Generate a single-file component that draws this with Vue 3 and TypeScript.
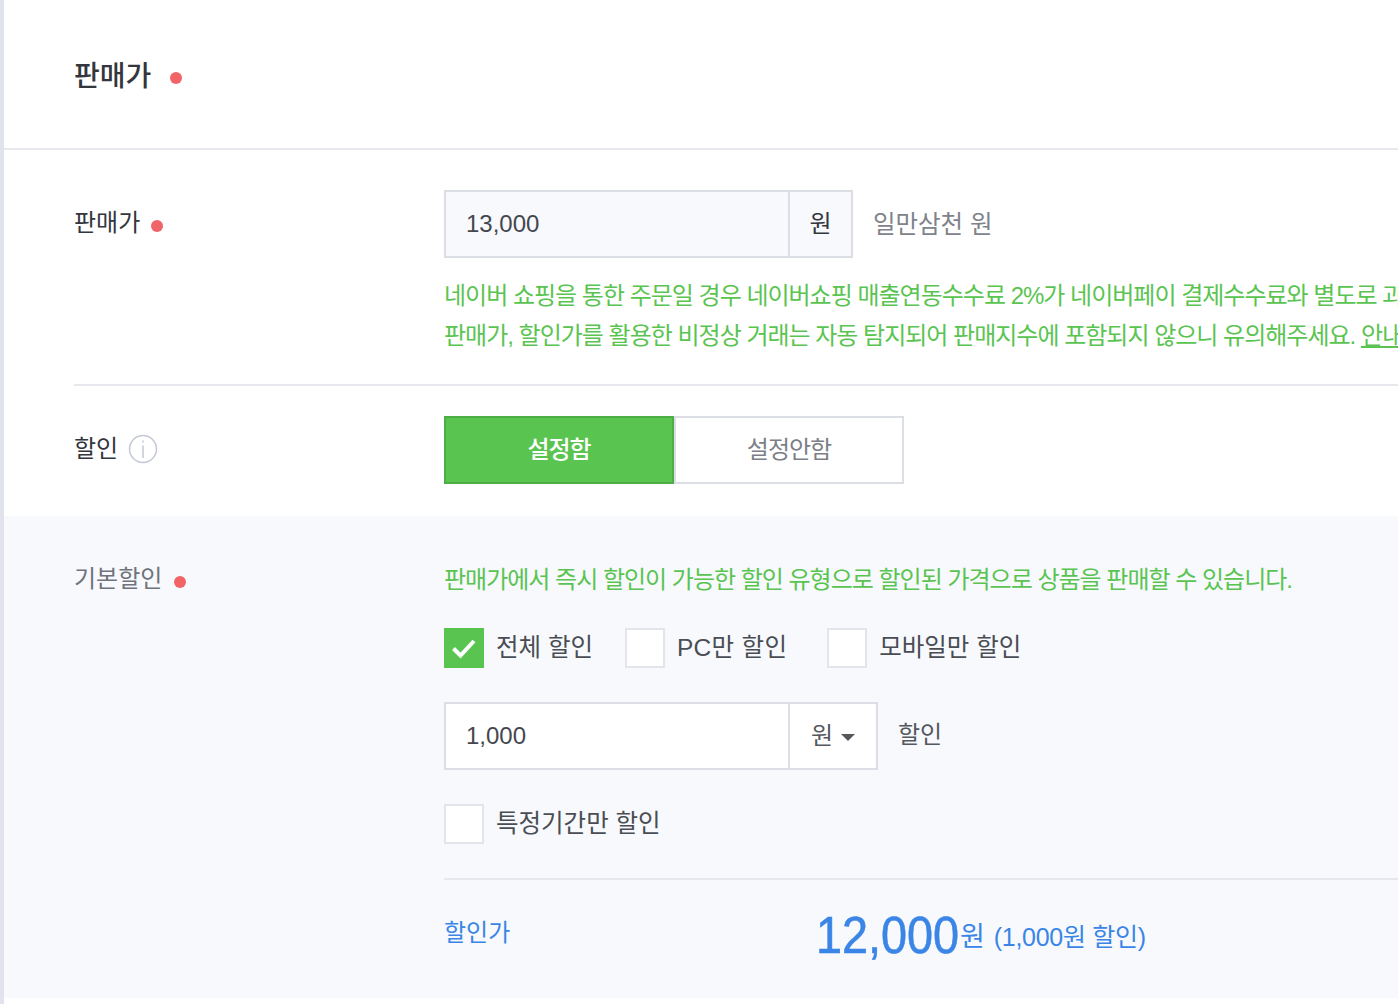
<script setup lang="ts">
const options = [
  { label: '전체 할인', checked: true },
  { label: 'PC만 할인', checked: false },
  { label: '모바일만 할인', checked: false },
]
</script>

<template>
  <div class="page">
    <header class="head">
      <h2 class="title">판매가</h2>
      <i class="dot big"></i>
    </header>

    <section class="row price-row">
      <div class="label">판매가<i class="dot"></i></div>
      <div class="body">
        <div class="field-line">
          <div class="combo tinted">
            <span class="value">13,000</span>
            <span class="unit">원</span>
          </div>
          <span class="hangul">일만삼천 원</span>
        </div>
        <p class="note first">네이버 쇼핑을 통한 주문일 경우 네이버쇼핑 매출연동수수료 2%가 네이버페이 결제수수료와 별도로 과금됩니다.</p>
        <p class="note">판매가, 할인가를 활용한 비정상 거래는 자동 탐지되어 판매지수에 포함되지 않으니 유의해주세요. <u>안내</u></p>
      </div>
    </section>

    <section class="row toggle-row">
      <div class="label">할인
        <svg class="info" width="30" height="30" viewBox="0 0 30 30" fill="none">
          <circle cx="15" cy="15" r="13.5" stroke="#c3c8d4" stroke-width="1.5" />
          <path d="M15 11.5V24M15 6.5v2" stroke="#c3c8d4" stroke-width="1.5" />
        </svg>
      </div>
      <div class="body">
        <div class="toggle">
          <button class="btn on"><span>설정함</span></button>
          <button class="btn off"><span>설정안함</span></button>
        </div>
      </div>
    </section>

    <section class="panel">
      <div class="label muted">기본할인<i class="dot"></i></div>
      <div class="body">
        <p class="note single">판매가에서 즉시 할인이 가능한 할인 유형으로 할인된 가격으로 상품을 판매할 수 있습니다.</p>
        <div class="checks">
          <label v-for="o in options" :key="o.label" class="check">
            <span class="box" :class="{ checked: o.checked }">
              <svg v-if="o.checked" width="26" height="22" viewBox="0 0 26 22" fill="none">
                <path d="M2.5 11.5 9.5 18.5 23 4" stroke="#fff" stroke-width="4" />
              </svg>
            </span>
            <span class="check-text">{{ o.label }}</span>
          </label>
        </div>
        <div class="field-line discount">
          <div class="combo">
            <span class="value">1,000</span>
            <span class="unit select">원<i class="caret"></i></span>
          </div>
          <span class="suffix">할인</span>
        </div>
        <label class="check period">
          <span class="box"></span>
          <span class="check-text">특정기간만 할인</span>
        </label>
        <div class="result">
          <span class="result-label">할인가</span>
          <div class="amount">
            <strong>12,000</strong><span class="won">원</span><span class="detail">(1,000원 할인)</span>
          </div>
        </div>
      </div>
    </section>
  </div>
</template>

<style>
html, body { margin: 0; background: #fff; }
</style>

<style scoped>
.page {
  width: 1398px;
  height: 1004px;
  box-sizing: border-box;
  overflow: hidden;
  border-left: 4px solid #e0e3ec;
  background: #fff;
  color: #33363c;
  font-family: "Liberation Sans", "Noto Sans CJK KR", sans-serif;
  font-size: 24px;
}
.head {
  height: 148px;
  box-sizing: content-box;
  border-bottom: 2px solid #e6e8ed;
  padding-left: 70px;
  display: flex;
  align-items: center;
  gap: 19px;
}
.title { margin: 6px 0 0; font-size: 28px; font-weight: 500; line-height: 40px; }
.dot {
  display: inline-block;
  width: 12px;
  height: 12px;
  border-radius: 50%;
  background: #f06366;
  margin: 6px 0 0 11px;
}
.dot.big { margin: 8px 0 0; }
.row { margin-left: 70px; display: flex; }
.price-row { padding-top: 40px; height: 194px; box-sizing: content-box; border-bottom: 2px solid #e6e8ed; }
.toggle-row { padding-top: 30px; height: 100px; }
.label { width: 370px; flex: none; line-height: 66px; height: 66px; white-space: nowrap; display: flex; align-items: center; }
.label.muted { color: #6f737b; line-height: 40px; height: 40px; }
.label.muted .dot { margin-left: 12px; }
.info { margin-left: 10px; }
.body { flex: 1; min-width: 0; }
.field-line { display: flex; align-items: center; }
.combo {
  display: flex;
  height: 68px;
  box-sizing: border-box;
  border: 2px solid #dcdee5;
  background: #fff;
}
.combo.tinted { background: #f7f9fd; }
.value { width: 342px; box-sizing: border-box; padding-left: 20px; line-height: 64px; font-size: 24px; color: #44474e; }
.unit { border-left: 2px solid #dcdee5; width: 63px; box-sizing: border-box; text-align: center; line-height: 64px; font-size: 24px; }
.unit.select { width: 88px; color: #55585f; display: flex; align-items: center; justify-content: center; gap: 8px; }
.caret { width: 0; height: 0; border: 7.5px solid transparent; border-top: 7.5px solid #55585f; border-bottom: 0; margin-top: 3px; }
.hangul { margin: 0 0 4px 20px; color: #80838a; font-size: 24.5px; }
.suffix { margin: 0 0 8px 20px; color: #55585f; }
.note {
  margin: 0;
  color: #5ac451;
  font-size: 24px;
  line-height: 40px;
  letter-spacing: -1px;
  white-space: nowrap;
}
.note.first { margin-top: 18px; }
.note u { text-decoration: underline; }
.toggle { display: flex; height: 68px; }
.btn {
  font: inherit;
  letter-spacing: -1px;
  box-sizing: border-box;
  height: 68px;
  padding: 0 0 6px;
  cursor: pointer;
}
.btn.on { width: 230px; background: #5ac451; border: 2px solid #4cae44; color: #fff; font-weight: 500; }
.btn.off { width: 230px; background: #fff; border: 2px solid #dcdee5; color: #7c7f87; }
.panel {
  height: 482px;
  background: #f7f9fd;
  box-sizing: border-box;
  padding: 44px 0 0 70px;
  display: flex;
}
.panel .label { margin-top: -1px; }
.checks { display: flex; gap: 32px; margin-top: 28px; }
.check { display: flex; align-items: center; gap: 12px; height: 40px; color: #4a4d54; white-space: nowrap; font-size: 24.5px; }
.check-text { margin-bottom: 5px; }
.check:nth-child(2) { letter-spacing: .3px; margin-right: 8px; }
.box {
  width: 40px;
  height: 40px;
  box-sizing: border-box;
  border: 2px solid #e3e5ea;
  background: #fff;
  display: flex;
  align-items: center;
  justify-content: center;
  flex: none;
}
.box.checked { background: #5ac451; border-color: #5ac451; }
.discount { margin-top: 34px; }
.period { margin-top: 34px; }
.result {
  margin-top: 34px;
  border-top: 2px solid #e6e8ed;
  display: flex;
  color: #3a85e6;
  height: 118px;
}
.result-label { width: 372px; flex: none; line-height: 106px; }
.amount { white-space: nowrap; display: flex; align-items: flex-end; height: 106px; }
.amount strong {
  display: block;
  width: 144px;
  font-size: 52px;
  font-weight: 400;
  -webkit-text-stroke: .6px #3a85e6;
  line-height: 60px;
  margin-bottom: 21px;
  transform: scaleX(.9);
  transform-origin: left center;
}
.won { font-size: 27px; line-height: 40px; margin-bottom: 29px; }
.detail { font-size: 25px; letter-spacing: -.3px; margin: 0 0 29px 9px; line-height: 40px; }
</style>
